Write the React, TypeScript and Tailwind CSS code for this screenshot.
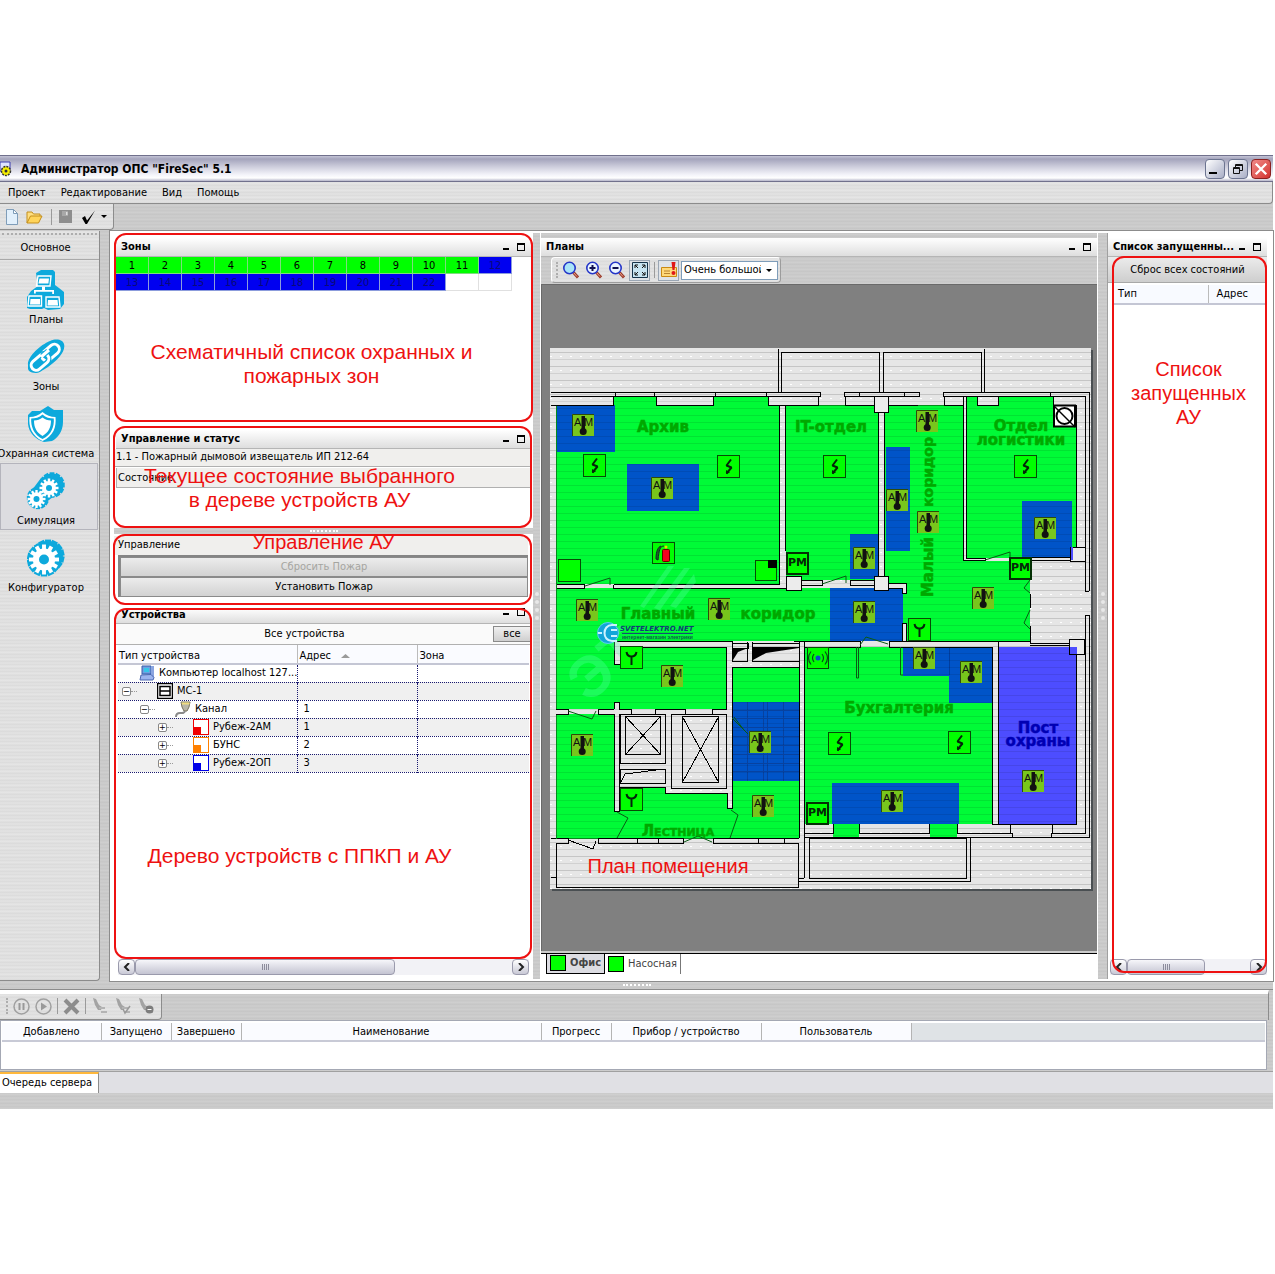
import React from "react";

const METAL =
  "bg-[repeating-linear-gradient(180deg,#c9c9c9_0px,#d0d0d0_2px,#c4c4c4_3px,#cecece_5px,#c6c6c6_7px)]";
const METAL_LIGHT =
  "bg-[repeating-linear-gradient(180deg,#e0e0e0_0px,#e6e6e6_2px,#d9d9d9_3px,#e3e3e3_5px,#dadada_7px)]";
const SANS = "font-['DejaVu_Sans_Condensed','DejaVu_Sans',sans-serif]";
const NOTE = "pointer-events-none absolute text-center font-['Liberation_Sans',sans-serif] leading-6 text-[#ee1111]";

function Callout({ className }: { className: string }) {
  return <div className={`pointer-events-none absolute z-10 rounded-xl border-2 border-[#ee1111] ${className}`} />;
}

function PanelHeader({ title, size = "h-[19px] items-center" }: { title: string; size?: string }) {
  return (
    <header
      className={`flex justify-between border-b border-[#b5b5b5] bg-gradient-to-b from-white to-[#dedede] pr-1.5 pl-[5px] ${size}`}
    >
      <h2 className="truncate text-[11px] leading-3.5 font-bold">{title}</h2>
      <div className="flex shrink-0 items-center gap-2">
        <button type="button" aria-label="Свернуть" className="flex h-2 w-1.5 items-end pb-px">
          <span className="block h-0.5 w-full bg-black" />
        </button>
        <button type="button" aria-label="Развернуть" className="h-2 w-2 border border-t-2 border-black" />
      </div>
    </header>
  );
}

function ScrollBar({ thumb }: { thumb: string }) {
  const btn =
    "flex w-[17px] shrink-0 items-center justify-center rounded-sm border border-[#9a9aac] bg-gradient-to-b from-white to-[#c9c9d6]";
  return (
    <div className="flex h-4 bg-[#f2f2f6]">
      <button type="button" aria-label="Влево" className={btn}>
        <svg viewBox="0 0 8 8" className="h-2 w-2"><path d="M6 0 2 4l4 4" fill="none" stroke="#222" strokeWidth="2" /></svg>
      </button>
      <div className="flex-1">
        <div className={`flex h-4 items-center justify-center gap-px rounded-sm border border-[#9a9aac] bg-gradient-to-b from-[#f6f6fa] to-[#c4c4d2] ${thumb}`}>
          {[0, 1, 2, 3].map((i) => (
            <span key={i} className="h-1.5 w-px bg-[#8c8c9c]" />
          ))}
        </div>
      </div>
      <button type="button" aria-label="Вправо" className={btn}>
        <svg viewBox="0 0 8 8" className="h-2 w-2"><path d="m2 0 4 4-4 4" fill="none" stroke="#222" strokeWidth="2" /></svg>
      </button>
    </div>
  );
}

/* ---------- sidebar icons ---------- */

function GearShape({ cx, cy, r, teeth, hole }: { cx: number; cy: number; r: number; teeth: number; hole: number }) {
  return (
    <g>
      {Array.from({ length: teeth }, (_, i) => (
        <rect key={i} x={cx - r * 0.13} y={cy - r} width={r * 0.26} height={r * 0.5} fill="#fff" transform={`rotate(${(360 / teeth) * i} ${cx} ${cy})`} />
      ))}
      <circle cx={cx} cy={cy} r={r * 0.74} fill="#fff" />
      <circle cx={cx} cy={cy} r={hole} fill="#0da9dc" />
    </g>
  );
}

function GearBack({ cx, cy, r, teeth }: { cx: number; cy: number; r: number; teeth: number }) {
  return (
    <g fill="#0da9dc">
      <circle cx={cx} cy={cy} r={r * 0.96} />
      {Array.from({ length: teeth }, (_, i) => (
        <rect key={i} x={cx - r * 0.2} y={cy - r * 1.06} width={r * 0.4} height={r * 0.6} transform={`rotate(${(360 / teeth) * i} ${cx} ${cy})`} />
      ))}
    </g>
  );
}

const C = "#0da9dc";

function PlansIcon() {
  return (
    <svg viewBox="0 0 40 42" className="h-[42px] w-10">
      <path d="M10 4 15 1h12l2 2v13l4 3 5 4v12l-4 5-12 1-4-2-2 1H4l-3-1V28l4-6 7-5z" fill={C} />
      <g fill="none" stroke="#fff" strokeWidth="1.400">
        <path d="M12 7h13l-1 10H10.500z" />
        <path d="M3 27h12.500v10H2z" />
        <path d="M20 28h13l1 10H20z" />
      </g>
      <g fill="#fff">
        <path d="M13.500 9.500h9.500l-.6 5h-10zM4.500 30h9.500v5.500H4zM22 31h9.500l.6 5.500H21.500z" />
        <path d="M16 17.500h3V21h-3zM8 21h20v1.800H8zM8 22h1.800v2.500H8zM26.200 22H28v3h-1.800z" />
      </g>
    </svg>
  );
}

function LinkIcon() {
  return (
    <svg viewBox="0 0 40 36" className="h-9 w-10">
      <path d="M2 26C1 18 14 6 24 2c7-3 13-1 14 3 2 7-6 16-16 23C14 34 4 36 2 30z" fill={C} />
      <rect x="-10" y="-5" width="20" height="10" rx="5" transform="translate(24.500 13.500) rotate(-40)" fill="none" stroke="#fff" strokeWidth="3" />
      <rect x="-10" y="-5" width="20" height="10" rx="5" transform="translate(14 23) rotate(-40)" fill="none" stroke={C} strokeWidth="5.500" />
      <rect x="-10" y="-5" width="20" height="10" rx="5" transform="translate(14 23) rotate(-40)" fill="none" stroke="#fff" strokeWidth="3" />
      <path d="m16 17 6-5" stroke={C} strokeWidth="5.500" />
      <path d="m15 18 8-7" stroke="#fff" strokeWidth="3" />
    </svg>
  );
}

function ShieldIcon() {
  return (
    <svg viewBox="0 0 38 38" className="h-[38px] w-[38px]">
      <path d="m1 10 4-4 8 0 8-5 6 4h9v12c0 9-5 16-11 19l-8 1C8 34 2 28 1 19z" fill={C} />
      <path d="M2.500 12c5 0 9-1.500 13-5 4 3.500 8 5 13 5 1 10-2 19-13 24C5 31 1.500 22 2.500 12z" fill="#fff" />
      <path d="M4.200 13.500c4 0 8-1 11.300-4 3.500 3 7 4 11.300 4 .5 8-2 16-11.300 20.500C6.500 29.500 3.700 21 4.200 13.500z" fill={C} />
      <path d="M7 15.500c3.500 0 6-1 8.500-3 2.500 2 5 3 8.500 3 0 7-2.500 12-8.500 15.500C9.500 27.500 7 22.500 7 15.500z" fill="#fff" />
    </svg>
  );
}

function GearsIcon() {
  return (
    <svg viewBox="0 0 40 38" className="h-[38px] w-10">
      <path d="m3 22 12-16 16 16-16 12z" fill={C} />
      <GearBack cx={26} cy={13} r={12} teeth={12} />
      <GearBack cx={12} cy={26} r={10.5} teeth={12} />
      <GearShape cx={23} cy={16} r={9.5} teeth={12} hole={3} />
      <GearShape cx={10.5} cy={27} r={9} teeth={12} hole={3} />
    </svg>
  );
}

function GearIcon() {
  return (
    <svg viewBox="0 0 38 38" className="h-[38px] w-[38px]">
      <GearBack cx={21} cy={17} r={15.5} teeth={14} />
      <GearBack cx={17} cy={20.5} r={16} teeth={14} />
      <GearShape cx={17} cy={20.5} r={15} teeth={12} hole={5} />
    </svg>
  );
}

const NAV: { label: string; icon: React.ReactNode; active?: boolean }[] = [
  { label: "Планы", icon: <PlansIcon /> },
  { label: "Зоны", icon: <LinkIcon /> },
  { label: "Охранная система", icon: <ShieldIcon /> },
  { label: "Симуляция", icon: <GearsIcon />, active: true },
  { label: "Конфигуратор", icon: <GearIcon /> },
];

/* ---------- floor plan ---------- */

const GREEN = "#00fb37";
const BLUE = "#0054c8";

const greenRooms: [number, number, number, number][] = [
  [556, 405, 224, 179], [613, 397, 43, 8], [714, 397, 54, 8],
  [786, 405, 93, 175], [884, 405, 79, 183], [966, 397, 11, 8], [999, 397, 54, 8], [966, 405, 111, 153],
  [884, 561, 146, 80], [963, 561, 67, 20], [556, 588, 328, 53], [556, 641, 58, 68], [614, 664, 6, 38],
  [620, 647, 107, 62], [556, 714, 58, 124], [614, 811, 6, 27], [620, 787, 46, 51], [666, 794, 61, 44],
  [727, 808, 6, 30], [732, 667, 67, 171], [805, 647, 187, 177], [833, 824, 26, 13], [930, 824, 27, 13],
];
const blueAreas: [number, number, number, number][] = [
  [556, 405, 59, 47], [627, 464, 72, 47], [886, 447, 24, 104], [850, 534, 28, 45], [830, 588, 73, 53],
  [1022, 501, 50, 57], [903, 647, 46, 29], [949, 647, 44, 56], [832, 783, 127, 41], [732, 702, 67, 79],
];
const heatDetectors: [number, number][] = [
  [572, 414], [651, 477], [576, 599], [708, 598], [916, 410], [886, 489], [917, 511], [1034, 517], [853, 547],
  [853, 601], [972, 587], [661, 665], [571, 734], [749, 731], [752, 795], [913, 647], [960, 661], [881, 790], [1022, 770],
];
const smokeDetectors: [number, number][] = [[583, 454], [717, 455], [823, 455], [1014, 455], [828, 732], [948, 731]];
const pmModules: [number, number][] = [[786, 552], [1009, 557], [806, 802]];
const forks: [number, number][] = [[620, 646], [620, 788], [908, 618]];
const pillars: [number, number, number, number][] = [
  [786, 576, 15, 14], [874, 396, 14, 16], [874, 576, 14, 14], [1070, 547, 15, 14], [1069, 639, 15, 15],
];
const roomLabels: [number, number, string][] = [
  [663, 432, "Архив"], [831, 432, "IT-отдел"], [1021, 431, "Отдел"], [1021, 445, "логистики"],
  [658, 619, "Главный"], [778, 619, "коридор"], [899, 713, "Бухгалтерия"],
];

const WALLS = [
  "M551 392.500H820V396.500H551M615.500 392V396M654.500 392V396M715.500 392V396M766.500 392V396",
  "M551 405.500H613.500V397M656.500 397V405.500H713.500V397M768.500 397V405.500H818.500V397",
  "M778.500 349V392M781.500 392V352.500H879.500V392M883.500 392V352.500H981.500V392M984.500 349V392",
  "M919 392.500H844.500V396.500H919.500V392M845.500 397V405.500H918M859.500 392V396M904.500 392V396",
  "M1089.500 591V392.500H943.500V396.500H1085.500V591.500H1089M944.500 397V405.500H963M977.500 397V405.500H998.500V397M1050.500 392V396M1053.500 397V405H1076.500V547",
  "M779.500 405V584M785.500 405V551M878.500 412V576M884.500 412V576M963.500 397V560.500H985.500V558.500H966.500V397",
  "M1032 557.500H1070M1032 560.500H1070",
  "M556.500 584.500H584.500V588.500H556.500M613.500 584.500V588.500H786M613.500 584.500H780M801 580.500H822V585.500H801M850.500 580.500H874M850.500 580V585.500H874M888 583.500H906.500V593H902V588H888M902 641V623.500H906V641",
  "M614.500 664.500V641.500H732.500V662M620 664.500H614M620.500 647.500H726.500V709M614.500 709V702.500H619.500V709M556 709.500H568.500V714.500H556M614 709.500H598.500V714.500H614.500V811.500H619.500V714M619 709.500H631V714M655 714V709.500H685V714M712 714V709.500H727",
  "M620.500 714.500H665.500V763.500H620.500ZM625.500 716.500H660.500V754.500H625.500ZM625 716 661 755M661 716 625 755M671.500 714.500H726.500V788.500H671.500ZM682.500 716.500H718.500V782.500H682.500ZM682 716 719 783M719 716 682 783",
  "M620.500 769.500H665.500V783.500H620.500ZM621 782 625 774 664 769M620 787.500H665.500V793.500H727V808.500H732.500V667.500H799",
  "M732 643.500H748V648H732.500V661.500H747.500V642M752 647.500H799M752.500 642V661.500H799M752 643.500H799M799.500 642V838M804.500 878V641.500H860.500V647.500H805M804.500 641.500H794",
  "M889 641.500H998.500V824M992.500 647V824.500H1076.500V654M889 641V647.500H992",
  "M903 641.500H1030M1030.500 594V608M1030.500 626V643.500H1069M1030 645.500H1069M1089.500 615.500H1085.500V833.500H1052.500V824M1089.500 615V837.500H805M1010.500 824V833.500H957.500V824M1010 833H1012V837M1051 837V833H1053M929.500 824V833.500H859.500V824M805 833.500H833V824",
  "M809.500 838.500H966.500V878.500H809.500ZM970.500 838V881.500H799M804 878.500H799",
  "M568.500 838.500H556.500M556 843.500H568.500V838M598.500 838.500H683.500V843.500H598.500ZM713.500 838.500H799M713.500 838V843.500H799M637.500 838V843M658.500 838V843M758.500 838V843M784.500 838V843M556.500 843V887.500H798.500V843M551 877.500H556M568 840 593 849 596 841M551 838.500H556",
].join("");

const DOORS =
  "M585 586 610 578V585M822 584 846 576V583M985 560 1010 552V559M568 711 592 719 596 711M617 812 628 818 617 838M731 810 738 815 730 838M860 645 866 637 888 644M1030 580 1024 588 1030 593M1030 610 1024 623 1030 629M684 842 698 836 712 842M732 718 748 734M734 717 744 730M856.500 647V678H858.500V647M900.500 647V675H903";

function FloorPlan() {
  return (
    <svg viewBox="550 348 544 544" className="h-auto w-full max-w-[544px] min-w-0" role="img" aria-label="План помещения">
      <defs>
        <pattern id="scan" x="0" y="348" width="10" height="7" patternUnits="userSpaceOnUse">
          <rect y="4" width="10" height="1" fill="#000" opacity=".09" />
        </pattern>
        <pattern id="dots" x="0" y="348" width="10" height="14" patternUnits="userSpaceOnUse">
          <rect y="4" width="10" height="1" fill="#000" opacity=".06" />
          <rect y="8" width="2" height="1" fill="#fff" />
        </pattern>
        <g id="heat">
          <rect width="22" height="22" fill="#78c61c" />
          <path d="M.5 22V.5H22" fill="none" stroke="#2d4b0a" />
          <text x="2" y="12" fontSize="11" fill="#111" className="font-['Liberation_Sans_Narrow','Liberation_Sans',sans-serif]">A</text>
          <text x="12" y="12" fontSize="11" fill="#111" className="font-['Liberation_Sans_Narrow','Liberation_Sans',sans-serif]">M</text>
          <rect x="9.500" y="2" width="3.500" height="14" fill="#111" />
          <circle cx="11.200" cy="17.500" r="3.500" fill="#111" />
        </g>
        <g id="smoke">
          <rect x=".5" y=".5" width="22" height="22" fill="#0f0" stroke="#064a06" />
          <path d="M14 4.500 9.500 10.500l5 2-5 6" fill="none" stroke="#04240a" strokeWidth="2" strokeLinejoin="bevel" />
          <path d="M9 19v-4l4 2.500z" fill="#04240a" />
        </g>
        <g id="pm">
          <rect x="1" y="1" width="21" height="21" fill="#0f0" stroke="#043004" strokeWidth="2" />
          <text x="11.500" y="14" fontSize="11" fontWeight="700" textAnchor="middle" fill="#06280a" className="font-['DejaVu_Sans',sans-serif]">PM</text>
        </g>
        <g id="fork">
          <rect x=".5" y=".5" width="22" height="22" fill="#0f0" stroke="#064a06" />
          <path d="M6.500 6c.5 3 2 4.500 5 4.500s4.500-1.500 5-4.500M11.500 10.500V19" fill="none" stroke="#04240a" strokeWidth="2" />
        </g>
      </defs>

      <rect x="552" y="350" width="541" height="541" fill="#4a4f52" />
      <rect x="550" y="348" width="541" height="541" fill="#e6e6e6" />
      <rect x="550" y="348" width="541" height="541" fill="url(#dots)" />

      <g fill={GREEN}>
        {greenRooms.map(([x, y, w, h], i) => <rect key={i} x={x} y={y} width={w} height={h} />)}
      </g>
      <g fill={BLUE}>
        {blueAreas.map(([x, y, w, h], i) => <rect key={i} x={x} y={y} width={w} height={h} />)}
      </g>
      <path d="M949.500 647V675" stroke="#003ea0" />
      <rect x="998" y="647" width="79" height="177" fill="#4d4dff" />
      <path d="M732 710.500H799M732 718.500H799M732 727.500H799M732 736.500H799M732 745.500H799M732 754.500H799M732 763.500H799M732 771.500H799M747.500 702V781M763.500 702V781M767.500 702V781M783.500 702V781" stroke="#0742a0" fill="none" />
      <rect x="550" y="348" width="541" height="541" fill="url(#scan)" />

      <path d="M732 648H748L738 652 733 660ZM753 648H799L766 653 753 660Z" fill="#000" />
      <path d="M888 584H906V593H902V588H888ZM902 623H906V641H902Z" fill="#e6e6e6" />
      <path d="M556.500 405V709M556.500 714V838M963 405.500H884M878 405.500H786M556 838.500H799" fill="none" stroke="#058a1c" />
      <path d={WALLS} fill="none" stroke="#000" shapeRendering="crispEdges" />
      <path d={DOORS} fill="none" stroke="#0a5a14" />
      {pillars.map(([x, y, w, h], i) => (
        <rect key={i} x={x + 0.5} y={y + 0.5} width={w} height={h} fill="#ececec" stroke="#000" />
      ))}
      <path d="M1070 647h7v7h-7zM1071 547h2v13h-2z" fill="#4d4dff" />

      <g opacity=".3" className="font-['Liberation_Sans',sans-serif]" fontWeight="700" fill="#5dffb0">
        <text x="0" y="0" fontSize="58" transform="translate(588 704) rotate(-40)">ЭТ</text>
        <path d="M640 606 668 566h6l-30 42zM654 608 684 568h6l-30 42zM670 606 694 574l2 8-20 26z" />
      </g>

      <g fontSize="15" fontWeight="700" textAnchor="middle" fill="#00a800" stroke="#00a800" strokeWidth=".5" className="font-['DejaVu_Sans',sans-serif]">
        {roomLabels.map(([x, y, t]) => <text key={t} x={x} y={y}>{t}</text>)}
        <text x="678" y="836" style={{ fontVariant: "small-caps" }}>Лестница</text>
        <text transform="translate(933 472) rotate(-90)" fontSize="14">коридор</text>
        <text transform="translate(933 567) rotate(-90)">Малый</text>
        <g fill="#0000b4" stroke="#0000b4">
          <text x="1038" y="733">Пост</text>
          <text x="1038" y="746">охраны</text>
        </g>
      </g>

      {heatDetectors.map(([x, y], i) => <use key={i} href="#heat" x={x} y={y} />)}
      {smokeDetectors.map(([x, y], i) => <use key={i} href="#smoke" x={x} y={y} />)}
      {pmModules.map(([x, y], i) => <use key={i} href="#pm" x={x} y={y} />)}
      {forks.map(([x, y], i) => <use key={i} href="#fork" x={x} y={y} />)}

      <rect x="558.500" y="559.500" width="22" height="22" fill="#0f0" stroke="#064a06" />
      <rect x="755.500" y="560.500" width="21" height="20" fill="#0f0" stroke="#064a06" />
      <rect x="768" y="560" width="9" height="8" fill="#000" />
      <rect x="652.500" y="542.500" width="22" height="21" fill="#0f0" stroke="#064a06" />
      <rect x="662.500" y="549.500" width="7" height="12" rx="1" fill="#f5001e" stroke="#600" />
      <circle cx="666" cy="547" r="1.500" fill="#f6d000" />
      <path d="M664 546c-4 0-5 4-6 14l-2-1c0-8 2-12 5-13" fill="#1c6a1c" stroke="#123" />
      <rect x="807.500" y="647.500" width="21" height="21" fill="#0f0" stroke="#064a06" />
      <circle cx="818" cy="658" r="2.500" fill="#0a4acb" />
      <path d="M814 654q-3 4 0 8M811 651.500q-5 6.500 0 13M822 654q3 4 0 8M825 651.500q5 6.500 0 13" fill="none" stroke="#064a20" strokeWidth="1.200" />
      <rect x="1054" y="405.500" width="21" height="21" fill="#fff" stroke="#000" strokeWidth="2" />
      <circle cx="1064.500" cy="416" r="8" fill="none" stroke="#000" strokeWidth="2" />
      <path d="m1054 406 21 21" stroke="#000" strokeWidth="1.500" />

      <circle cx="608" cy="633" r="10.500" fill="#12a5d8" stroke="#59cdee" />
      <path d="M617 625h-5c-10 0-10 16 0 16h5M602 633h-4M611 630h6M611 636h6" fill="none" stroke="#c9f2ff" strokeWidth="2" />
      <text x="620" y="631" fontSize="7" fontWeight="700" fontStyle="italic" fill="#123a78" className="font-['DejaVu_Sans',sans-serif]">SVETELEKTRO.NET</text>
      <path d="M622 633.500H693" stroke="#154a7a" />
      <text x="622" y="639" fontSize="5" fontWeight="700" fill="#0d5a4a" className="font-['Liberation_Sans',sans-serif]">интернет-магазин электрики</text>

      <text x="668" y="873" fontSize="20" textAnchor="middle" fill="#ee1111" className="font-['Liberation_Sans',sans-serif]">План помещения</text>
    </svg>
  );
}

/* ---------- toolbar glyphs ---------- */

function Magnifier({ sign }: { sign?: "plus" | "minus" }) {
  return (
    <svg viewBox="0 0 18 18" className="h-[18px] w-[18px]">
      <path d="m11.500 11.500 4.500 5" stroke="#9b3a2a" strokeWidth="3" />
      <path d="m11 11 4 4.500" stroke="#f0a890" strokeWidth="1" />
      <circle cx="7.500" cy="7" r="5.700" fill={sign ? "#eaf4ff" : "#a9e4f8"} stroke="#2536c8" strokeWidth="1.600" />
      {sign && <path d={sign === "plus" ? "M4.500 7h6M7.500 4v6" : "M4.500 7h6"} stroke="#101050" strokeWidth="2" />}
    </svg>
  );
}

function Flashlight({ children }: { children?: React.ReactNode }) {
  return (
    <svg viewBox="0 0 18 18" className="h-[18px] w-[18px]">
      <path d="m2 1 3 1 3 6 3 2-1 3H7L4 8z" fill="#a3a3a3" />
      <path d="M8 11h6M10 15h6" stroke="#b3b3b3" strokeWidth="2" />
      {children}
    </svg>
  );
}

function VSep({ className = "h-4" }: { className?: string }) {
  return <span className={`w-px shrink-0 bg-[#9a9a9a] ${className}`} />;
}

function Grip() {
  return <span className="h-4 w-0 shrink-0 border-l-2 border-dotted border-[#adadad]" />;
}

/* ---------- devices ---------- */

type Device = { name: string; addr: string; indent: string; toggle: "" | "−" | "+"; gap: string; icon: React.ReactNode };

function DeviceSquare({ color }: { color: string }) {
  return (
    <svg viewBox="0 0 16 16" className="h-4 w-4 shrink-0">
      <rect x=".5" y=".5" width="15" height="15" fill="#fff" stroke={color} />
      <rect y="8" width="8" height="8" fill={color} />
    </svg>
  );
}

const DEVICES: Device[] = [
  {
    name: "Компьютер localhost 127...", addr: "", indent: "pl-[21px]", toggle: "", gap: "w-0",
    icon: (
      <svg viewBox="0 0 16 16" className="h-4 w-4 shrink-0">
        <path d="M3 1h9v8H3z" fill="#6fa0e0" stroke="#3a5aa8" />
        <path d="M5 3h5v4H5z" fill="#36c6e8" />
        <path d="M12 1h3v12h-3z" fill="#8aa4e0" />
        <path d="m2 10 10-.5 3 3-1 2.500H1z" fill="#9cb4ee" stroke="#4a66b0" />
      </svg>
    ),
  },
  {
    name: "МС-1", addr: "", indent: "pl-1", toggle: "−", gap: "w-[26px]",
    icon: (
      <svg viewBox="0 0 16 16" className="h-4 w-4 shrink-0">
        <path d="M.5.5h15v15H.5zM3 3.500h10v9H3zM3 8h10" fill="#fff" stroke="#000" strokeWidth="1.500" />
      </svg>
    ),
  },
  {
    name: "Канал", addr: "1", indent: "pl-[22px]", toggle: "−", gap: "w-[26px]",
    icon: (
      <svg viewBox="0 0 16 16" className="h-4 w-4 shrink-0">
        <path d="M6 1h9l-1 5-2 4H9L7 6z" fill="#b9b6a8" stroke="#77705a" />
        <path d="M6.500 1.500h8v2h-7.500z" fill="#f0dc80" />
        <path d="M10 10c-1 3-3 2-5 2s-4 1-4 4" fill="none" stroke="#8a8a8a" strokeWidth="2" />
      </svg>
    ),
  },
  { name: "Рубеж-2АМ", addr: "1", indent: "pl-10", toggle: "+", gap: "w-[26px]", icon: <DeviceSquare color="#f00000" /> },
  { name: "БУНС", addr: "2", indent: "pl-10", toggle: "+", gap: "w-[26px]", icon: <DeviceSquare color="#ff8000" /> },
  { name: "Рубеж-2ОП", addr: "3", indent: "pl-10", toggle: "+", gap: "w-[26px]", icon: <DeviceSquare color="#0000e8" /> },
];

const QUEUE: [string, string][] = [
  ["Добавлено", "w-[99px]"], ["Запущено", "w-[70px]"], ["Завершено", "w-[70px]"], ["Наименование", "w-[300px]"],
  ["Прогресс", "w-[70px]"], ["Прибор / устройство", "w-[150px]"], ["Пользователь", "w-[150px]"],
];

export default function App() {
  const winBtn = "flex h-5 w-5 items-center justify-center rounded-sm border border-[#6c7490] bg-gradient-to-br from-white to-[#a9aec6]";
  const action = "block h-5 w-full border border-[#8a8a8a] bg-gradient-to-b from-[#ececec] to-[#d2d2d2] text-center leading-4";
  return (
    <div className={`bg-white py-[155px] text-[11px] leading-4 text-black ${SANS}`}>
      <div className={`mr-0.5 ${METAL}`}>
        {/* title bar */}
        <div className="flex h-[27px] items-center justify-between border-y border-[#70708c] bg-[linear-gradient(180deg,#c4c4d6_0%,#a4a4bc_12%,#d0d0de_45%,#f4f4fa_75%,#ffffff_88%,#b4b4c8_100%)] pr-0.5">
          <div className="flex items-center gap-2">
            <svg viewBox="0 0 13 16" className="h-4 w-[13px]">
              <path d="M0 1h10v9H0z" fill="#dfe4ff" stroke="#3c3cb0" />
              <circle cx="6" cy="10" r="4.500" fill="#f6ee00" stroke="#333" strokeWidth="1.500" strokeDasharray="2 1" />
              <circle cx="6" cy="10" r="1.500" fill="#333" />
            </svg>
            <h1 className="text-[12px] leading-4 font-bold">Администратор ОПС "FireSec" 5.1</h1>
          </div>
          <div className="flex gap-[3px]">
            <button type="button" aria-label="Свернуть окно" className={winBtn}>
              <span className="mt-2 mr-1 h-0.5 w-2 bg-black" />
            </button>
            <button type="button" aria-label="Восстановить окно" className={winBtn}>
              <svg viewBox="0 0 12 12" className="h-3 w-3"><path d="M3.500 4V1.500h7v6H8M1.500 4.500h6v6h-6zM1.500 5.500h6M3.500 2.500h7" fill="none" stroke="#111" /></svg>
            </button>
            <button type="button" aria-label="Закрыть окно" className="flex h-5 w-5 items-center justify-center rounded-sm border border-[#8a2020] bg-gradient-to-br from-[#f08a8a] to-[#d22c2c]">
              <svg viewBox="0 0 12 12" className="h-3.5 w-3.5"><path d="m1.500 1.500 9 9m0-9-9 9" stroke="#fff" strokeWidth="2" /></svg>
            </button>
          </div>
        </div>

        {/* menu */}
        <nav className={`flex h-[22px] items-center gap-[15px] rounded-br border-r border-b border-[#8c8c8c] pl-2 ${METAL_LIGHT}`}>
          {["Проект", "Редактирование", "Вид", "Помощь"].map((m) => (
            <button type="button" key={m}>{m}</button>
          ))}
        </nav>

        {/* toolbar */}
        <div className="flex h-[27px]">
          <div className={`flex h-[26px] w-[114px] items-center rounded-br border-r border-b border-[#8c8c8c] pl-1 ${METAL_LIGHT}`}>
            <button type="button" aria-label="Новый" className="mr-1.5">
              <svg viewBox="0 0 16 16" className="h-4 w-4"><path d="M2.500.5h7l4 4v11h-11z" fill="#e2f0fc" stroke="#7f9db9" /><path d="M9.500.5v4h4z" fill="#fff" stroke="#7f9db9" /></svg>
            </button>
            <button type="button" aria-label="Открыть" className="mr-2">
              <svg viewBox="0 0 17 14" className="h-3.5 w-[17px]"><path d="M1 13V2h5l1.500 2H14v3" fill="#ffdf80" stroke="#c38e1c" /><path d="m1 13 3.500-7H16l-3.500 7z" fill="#ffd45a" stroke="#c38e1c" /></svg>
            </button>
            <VSep />
            <button type="button" aria-label="Сохранить" className="mr-2 ml-1.5">
              <svg viewBox="0 0 15 15" className="h-[15px] w-[15px]"><path d="M1 1h13v13H1z" fill="#8e8e8e" /><path d="M4 2h6v5H4z" fill="#a8a8a8" /><path d="M8 3h1.500v3H8z" fill="#ddd" /></svg>
            </button>
            <button type="button" aria-label="Применить">
              <svg viewBox="0 0 16 16" className="h-4 w-4"><path d="m1 9 3-2 2 4.500L14 1.500 6 15H4.500z" fill="#000" /></svg>
            </button>
            <svg viewBox="0 0 6 3" className="ml-1 h-[3px] w-1.5"><path d="M0 0h6L3 3z" /></svg>
          </div>
        </div>

        {/* body */}
        <div className="flex">
          <aside className={`flex w-[100px] shrink-0 flex-col rounded-br border-r border-b border-[#8c8c8c] ${METAL_LIGHT}`}>
            <div className="mx-0.5 mt-0.5 border-t-2 border-dotted border-[#adadad]" />
            <h2 className="mt-[5px] h-5 border-b border-[#a9a9a9] pr-2 text-center">Основное</h2>
            <nav className="mt-0.5">
              {NAV.map((n) => (
                <button
                  type="button"
                  key={n.label}
                  className={`flex h-[67px] w-[98px] flex-col items-center justify-between border pt-1.5 pr-1.5 whitespace-nowrap ${n.active ? "border-[#b4b4bc] bg-[#dcdce0]" : "border-transparent"}`}
                >
                  <span className="flex h-[42px] items-center">{n.icon}</span>
                  <span>{n.label}</span>
                </button>
              ))}
            </nav>
          </aside>

          <div className={`ml-2.5 flex min-w-0 flex-1 border-2 border-r-4 border-white shadow-[0_0_0_1px_#8c8c8c] ${METAL}`}>
            {/* left column */}
            <div className="w-[421px] shrink-0 bg-white pl-0.5">
              <section className="relative h-[189px] pt-[5px] pr-0.5 pl-0.5">
                <Callout className="inset-x-0 inset-y-0" />
                <PanelHeader title="Зоны" />
                <div className="grid w-[396px] grid-cols-12">
                  {Array.from({ length: 24 }, (_, i) => (
                    <div
                      key={i}
                      className={`h-[17px] border-r border-b pt-px text-center ${i < 11 ? "border-[#7fdc7f] bg-[#00ff00]" : i < 22 ? "border-[#8c9cdc] bg-[#0000f0] text-[#0a0a78]" : "border-[#e0e0e0]"}`}
                    >
                      {i < 22 ? i + 1 : ""}
                    </div>
                  ))}
                </div>
                <p className={`${NOTE} inset-x-0 top-[107px] pr-6 text-[21px]`}>Схематичный список охранных и<br />пожарных зон</p>
              </section>

              <section className="relative mt-1 h-[102px] pt-1 pr-0.5">
                <Callout className="inset-y-0 right-px -left-px" />
                <div className="ml-0.5"><PanelHeader title="Управление и статус" /></div>
                <p className="h-[18px] border-b border-[#b0b0b0] bg-[#f0efed] pl-0.5">1.1 - Пожарный дымовой извещатель ИП 212-64</p>
                <p className="mt-px ml-0.5 h-5 border-b border-l border-[#b0b0b0] bg-[#f0efed] pt-0.5 pl-px">Состояние</p>
                <p className={`${NOTE} inset-x-0 top-[38px] pr-12 text-[21px]`}>Текущее состояние выбранного<br />в дереве устройств АУ</p>
              </section>

              <div className={`flex h-1.5 items-center justify-center ${METAL}`}>
                <span className="w-7 border-t-2 border-dotted border-white" />
              </div>

              <section className="relative h-[71px] pt-0.5 pr-[5px]">
                <Callout className="inset-y-0 right-px -left-px" />
                <p className="h-[19px] bg-[#f0efed] pt-px pl-1">Управление</p>
                <div className="ml-1 border-t-2 border-l-2 border-[#858585]">
                  <button type="button" disabled className={`${action} text-[#a5a5a0]`}>Сбросить Пожар</button>
                  <button type="button" className={action}>Установить Пожар</button>
                </div>
                <p className={`${NOTE} inset-x-0 -top-1 text-[20px]`}>Управление АУ</p>
              </section>

              <section className="relative mt-[3px] pr-0.5">
                <Callout className="top-0 right-px bottom-5 left-0" />
                <div className="ml-0.5"><PanelHeader title="Устройства" size="h-4 items-start" /></div>
                <div className="ml-0.5 flex h-[21px] items-center border-b border-[#b0b0b0] bg-[#fafafa]">
                  <p className="flex-1 text-center">Все устройства</p>
                  <button type="button" className="h-4 w-[38px] border border-[#8a8a8a] bg-gradient-to-b from-[#f0f0f0] to-[#cfcfcf] leading-3">все</button>
                </div>
                <table className="ml-1 w-[411px] table-fixed border-collapse">
                  <thead>
                    <tr className="h-[19px] border-b-2 border-[#c4c6d4] bg-[#fafbff] text-left">
                      <th className="w-[179px] p-0 pt-1 pl-px font-normal leading-3">Тип устройства</th>
                      <th className="w-[120px] border-l border-[#bbb] p-0 pt-1 pl-0.5 font-normal leading-3">
                        Адрес<svg viewBox="0 0 9 4" className="ml-2.5 inline h-1 w-[9px]"><path d="M0 4h9L4.500 0z" fill="#9a9a9a" /></svg>
                      </th>
                      <th className="border-l border-[#bbb] p-0 pt-1 pl-0.5 font-normal leading-3">Зона</th>
                    </tr>
                  </thead>
                  <tbody>
                    {DEVICES.map((d, i) => (
                      <tr key={d.name} className={`h-[18px] border-b border-dotted border-[#1a1a70] ${i % 2 ? "bg-[#f0f0f0]" : ""}`}>
                        <td className="p-0">
                          <div className={`flex items-center whitespace-nowrap ${d.indent}`}>
                            {d.toggle && (
                              <button type="button" aria-label={`Узел ${d.name}`} className="flex h-[9px] w-[9px] shrink-0 items-center justify-center rounded-xs border border-[#888] bg-white text-[9px] leading-none">
                                {d.toggle}
                              </button>
                            )}
                            <span className={`shrink-0 ${d.gap}`}>
                              {d.toggle && <span className="block w-1.5 border-b border-dotted border-[#999]" />}
                            </span>
                            {d.icon}
                            <span className="pl-1">{d.name}</span>
                          </div>
                        </td>
                        <td className="border-l border-dotted border-[#1a1a70] p-0 pl-1.5">{d.addr}</td>
                        <td className="border-l border-dotted border-[#1a1a70] p-0" />
                      </tr>
                    ))}
                  </tbody>
                </table>
                <div className="h-[186px]" />
                <p className={`${NOTE} inset-x-0 top-[236px] pr-12 text-[21px]`}>Дерево устройств с ППКП и АУ</p>
                <div className="mr-0.5 ml-1"><ScrollBar thumb="w-[260px]" /></div>
                <div className="h-1" />
              </section>
            </div>

            {/* vertical splitter */}
            <div className="flex w-[7px] shrink-0 items-center justify-center">
              <span className="h-7 border-l-4 border-dotted border-[#e8e8e8]" />
            </div>

            {/* plans */}
            <section className="flex min-w-0 flex-1 flex-col border-l border-white pt-[5px]">
              <PanelHeader title="Планы" />
              <div className="h-[27px] pl-2.5">
                <div className={`flex h-[26px] w-[230px] items-center gap-1 rounded border border-[#9c9c9c] border-t-white border-l-white pl-1 ${METAL_LIGHT}`}>
                  <Grip />
                  <button type="button" aria-label="Масштаб"><Magnifier /></button>
                  <button type="button" aria-label="Увеличить" className="ml-px"><Magnifier sign="plus" /></button>
                  <button type="button" aria-label="Уменьшить" className="ml-px"><Magnifier sign="minus" /></button>
                  <button type="button" aria-label="Вписать" className="-ml-px flex h-[21px] w-[21px] items-center justify-center border border-[#9aa6b4] bg-[#dfe3e8]">
                    <svg viewBox="0 0 16 16" className="h-4 w-4"><path d="M.5.5h15v15H.5z" fill="#c7e4f2" stroke="#14324a" /><path d="M3 6V3h3M10 3h3v3M13 10v3h-3M6 13H3v-3M3 3l3 3M13 3l-3 3M13 13l-3-3M3 13l3-3" fill="none" stroke="#111" /></svg>
                  </button>
                  <VSep className="h-4" />
                  <button type="button" aria-label="Тревоги" className="-ml-px flex h-[21px] w-[21px] items-center justify-center border border-[#9aa6b4] bg-[#dfe3e8]">
                    <svg viewBox="0 0 16 16" className="h-4 w-4"><path d="M.5 5.500h15v9H.5z" fill="#ffd97a" stroke="#c98a14" /><path d="M3 9h6M3 11.500h6" stroke="#b98430" /><path d="M10.500 0h4l-1 8h-2z" fill="#e01818" /><circle cx="12.500" cy="11" r="2" fill="#e01818" /></svg>
                  </button>
                  <select aria-label="Размер значков" defaultValue="xl" className="-ml-0.5 h-[19px] w-[97px] appearance-none border border-[#7f9db9] bg-white pr-4 pl-0.5 text-[11px]">
                    <option value="xl">Очень большой</option>
                  </select>
                  <svg viewBox="0 0 6 3" className="pointer-events-none -ml-4 h-[3px] w-1.5"><path d="M0 0h6L3 3z" /></svg>
                </div>
              </div>
              <div className="flex flex-1 items-center justify-center border-t border-l border-[#6a6a6a] bg-[#808080] pt-1 pl-1">
                <FloorPlan />
              </div>
              <div className="mt-0.5 flex h-[26px] items-start border-t border-black bg-white pl-[5px] text-[#444]">
                <button type="button" className="flex h-5 items-center gap-1 border border-t-0 border-black bg-[#dcdce2] px-[3px] font-bold">
                  <span className="h-4 w-4 border border-black bg-[#00ff00]" />Офис
                </button>
                <button type="button" className="flex h-5 items-center gap-1 border-r border-[#777] px-[3px]">
                  <span className="h-4 w-4 border border-black bg-[#00ff00]" />Насосная
                </button>
              </div>
            </section>

            <div className="flex w-2.5 shrink-0 items-center justify-center border-l border-white">
              <span className="h-7 border-l-4 border-dotted border-[#e8e8e8]" />
            </div>

            {/* running list */}
            <section className="relative flex w-[162px] shrink-0 flex-col border-l border-[#a0a0a0] bg-white pt-[5px] pr-0.5">
              <Callout className="top-[23px] right-0.5 bottom-1.5 left-1" />
              <PanelHeader title="Список запущенны..." />
              <button type="button" className="h-[26px] border-b border-[#a8a8a8] bg-gradient-to-b from-[#ececec] to-[#cecece] text-center">Сброс всех состояний</button>
              <table className="mt-0.5 ml-1.5 table-fixed border-collapse">
                <thead>
                  <tr className="h-[19px] border-b-2 border-[#c4c6d4] bg-[#f8faff] text-left">
                    <th className="p-0 pl-1 font-normal">Тип</th>
                    <th className="w-[59px] border-l border-[#bbb] p-0 pl-2 font-normal">Адрес</th>
                  </tr>
                </thead>
              </table>
              <p className={`${NOTE} inset-x-0 top-[124px] text-[20px]`}>Список<br />запущенных<br />АУ</p>
              <div className="flex-1" />
              <div className="mb-1 ml-0.5"><ScrollBar thumb="w-[78px]" /></div>
            </section>
          </div>
        </div>

        {/* horizontal splitter */}
        <div className="flex h-2 items-center justify-center">
          <span className="w-7 border-t-2 border-dotted border-white" />
        </div>

        {/* server queue */}
        <section className="border-t border-[#8c8c8c]">
          <div className={`mr-1 border-t-4 border-r border-white border-r-[#8c8c8c] ${METAL}`}>
            <div className={`flex h-[26px] w-[162px] items-center gap-[5px] rounded-br border-r border-b border-[#8c8c8c] pl-1.5 ${METAL_LIGHT}`}>
              <Grip />
              <button type="button" aria-label="Пауза">
                <svg viewBox="0 0 17 17" className="h-[17px] w-[17px]"><circle cx="8.500" cy="8.500" r="7.500" fill="none" stroke="#a0a0a0" strokeWidth="1.500" /><path d="M6.500 5v7M10.500 5v7" stroke="#999" strokeWidth="2" /></svg>
              </button>
              <button type="button" aria-label="Пуск">
                <svg viewBox="0 0 17 17" className="h-[17px] w-[17px]"><circle cx="8.500" cy="8.500" r="7.500" fill="none" stroke="#a0a0a0" strokeWidth="1.500" /><path d="m6 4.500 6 4-6 4z" fill="#999" /></svg>
              </button>
              <VSep />
              <button type="button" aria-label="Удалить">
                <svg viewBox="0 0 17 17" className="h-[17px] w-[17px]"><path d="m2 2 13 13m0-13L2 15" stroke="#8c8c8c" strokeWidth="4" /></svg>
              </button>
              <VSep />
              <button type="button" aria-label="Очистить всё"><Flashlight /></button>
              <button type="button" aria-label="Очистить выполненные"><Flashlight><path d="m9 12 2 4 5-7" stroke="#999" strokeWidth="1.500" fill="none" /></Flashlight></button>
              <button type="button" aria-label="Очистить ошибочные"><Flashlight><circle cx="12.500" cy="12.500" r="4" fill="#7d7d7d" /><path d="M10.500 12.500h4" stroke="#fff" /></Flashlight></button>
            </div>
          </div>
          <div className="mr-1.5 border border-[#a4a8b4] bg-white px-px pt-0.5">
            <table className="w-full table-fixed border-collapse">
              <thead>
                <tr className="h-[18px] border-b-2 border-[#c8cad6]">
                  {QUEUE.map(([t, w]) => (
                    <th key={t} className={`border-r border-[#b4b4b4] bg-[#fafbff] p-0 pt-px text-center font-normal ${w}`}>{t}</th>
                  ))}
                  <th aria-label="Пусто" className="bg-[#dfe3e6] p-0" />
                </tr>
              </thead>
              <tbody>
                <tr className="h-7"><td colSpan={8} /></tr>
              </tbody>
            </table>
          </div>
          <div className="mt-px flex h-[22px] border-t border-[#a0a0a0] bg-[#e0e0e4]">
            <button type="button" className="w-[99px] border-t-2 border-r border-t-[#ffb83c] border-r-[#8c8c8c] bg-white pr-1 text-center whitespace-nowrap">Очередь сервера</button>
          </div>
        </section>
        <div className="h-4" />
      </div>
    </div>
  );
}
